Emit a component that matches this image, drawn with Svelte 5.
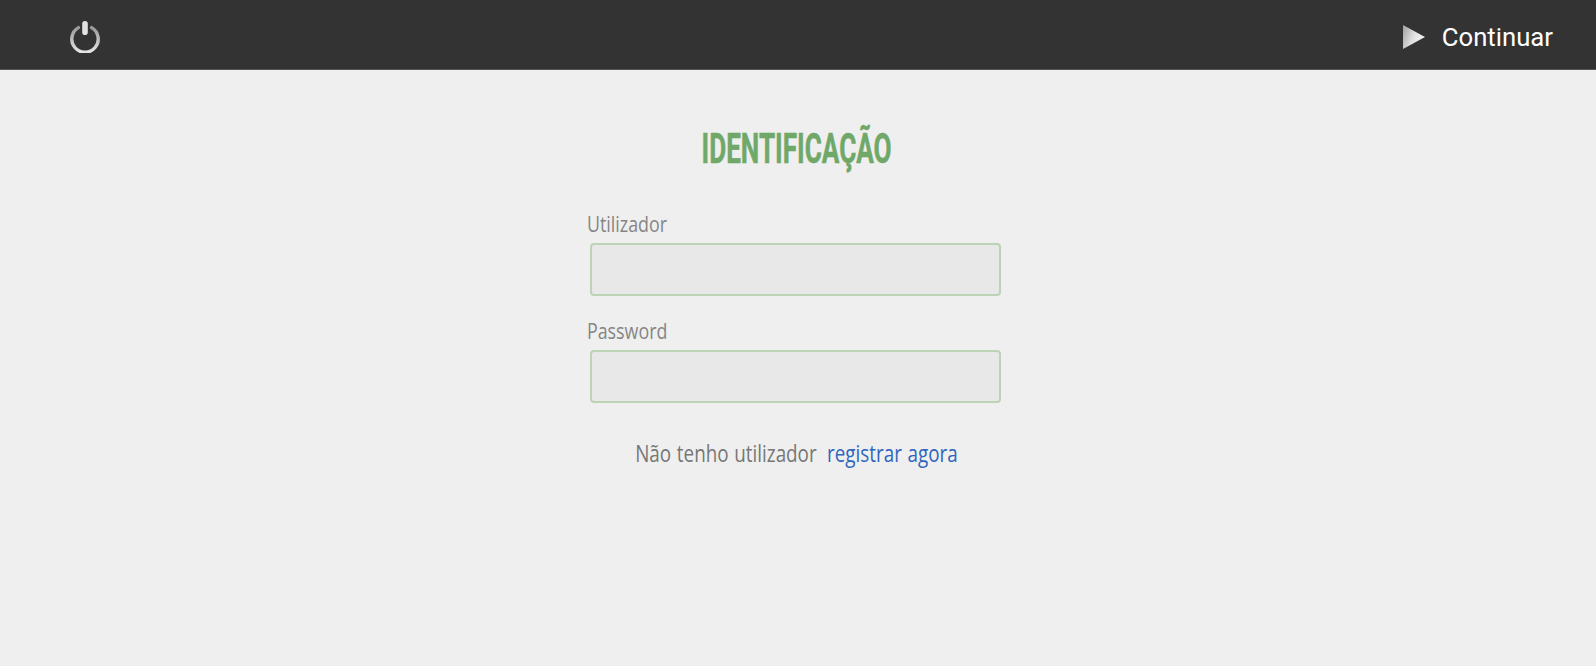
<script>
  let username = $state('');
  let password = $state('');
</script>

<div class="page">
  <header class="topbar">
    <button class="power" aria-label="Sair">
      <svg width="32" height="34" viewBox="0 0 32 34">
        <defs>
          <linearGradient id="powerGrad" x1="0" y1="0" x2="0" y2="1">
            <stop offset="0" stop-color="#9a9a9a" />
            <stop offset="1" stop-color="#e4e4e4" />
          </linearGradient>
        </defs>
        <path d="M9.4 8.6 A13.2 13.2 0 1 0 22.6 8.6" fill="none" stroke="url(#powerGrad)" stroke-width="3.4" stroke-linecap="round" />
        <rect x="13.2" y="2" width="5.6" height="14" rx="2.8" fill="#e2e2e2" />
      </svg>
    </button>
    <button class="continue">
      <svg width="24" height="28" viewBox="0 0 24 28">
        <defs>
          <linearGradient id="playGrad" x1="0" y1="0" x2="1" y2="0.4">
            <stop offset="0" stop-color="#a0a0a0" />
            <stop offset="0.6" stop-color="#e2e2e2" />
            <stop offset="1" stop-color="#f2f2f2" />
          </linearGradient>
        </defs>
        <polygon points="1,2 23,14 1,26" fill="url(#playGrad)" />
      </svg>
      <span>Continuar</span>
    </button>
  </header>

  <main class="content">
    <h1>IDENTIFICAÇÃO</h1>
    <form class="login">
      <label for="user"><span>Utilizador</span></label>
      <input id="user" type="text" bind:value={username} />
      <label for="pass"><span>Password</span></label>
      <input id="pass" type="password" bind:value={password} />
      <p class="register">
        <span class="narrow">Não tenho utilizador <a href="#registar">registrar agora</a></span>
      </p>
    </form>
  </main>
</div>

<style>
  :global(body) {
    background: #efefef;
  }

  .page {
    height: 666px;
    background: #efefef;
    font-family: "Open Sans", sans-serif;
    overflow: hidden;
  }

  .topbar {
    height: 70px;
    box-sizing: border-box;
    background: #333;
    border-bottom: 1px solid #555;
    display: flex;
    align-items: center;
    justify-content: space-between;
    padding: 3px 43px 0 69px;
  }

  .topbar button {
    background: none;
    border: none;
    padding: 0;
    display: flex;
    align-items: center;
    cursor: pointer;
  }

  .power svg {
    display: block;
  }

  .continue {
    gap: 16px;
    margin-top: 2px;
    color: #fff;
    font-family: Roboto, sans-serif;
    font-size: 25.7px;
  }

  .continue svg {
    margin-left: -1px;
  }

  .content {
    display: flex;
    flex-direction: column;
    align-items: center;
  }

  h1 {
    margin: 55px 0 0 -3px;
    font-family: Roboto, sans-serif;
    font-weight: 700;
    font-size: 42.5px;
    line-height: 48px;
    color: #6fa869;
    -webkit-text-stroke: 0.5px #6fa869;
    transform: scaleX(0.615);
    white-space: nowrap;
  }

  .login {
    width: 422px;
    margin-top: 37px;
    display: flex;
    flex-direction: column;
  }

  label {
    font-size: 22px;
    line-height: 26px;
    color: #858585;
    height: 28px;
  }

  label span {
    display: inline-block;
    transform: scaleX(0.81);
    transform-origin: left;
  }

  input {
    width: 411px;
    height: 53px;
    box-sizing: border-box;
    margin: 5px 0 0 3px;
    background: #e8e8e8;
    border: 2px solid #bcd3b6;
    border-radius: 4px;
    outline: none;
    display: block;
  }

  input + label {
    margin-top: 21px;
  }

  .register {
    margin: 35px 3px 0 0;
    text-align: center;
    font-size: 24px;
    line-height: 30px;
    color: #777;
    white-space: nowrap;
  }

  .narrow {
    display: inline-block;
    transform: scaleX(0.785);
    word-spacing: 1px;
  }

  .register a {
    color: #2f66bd;
    text-decoration: none;
    margin-left: 6px;
  }
</style>
